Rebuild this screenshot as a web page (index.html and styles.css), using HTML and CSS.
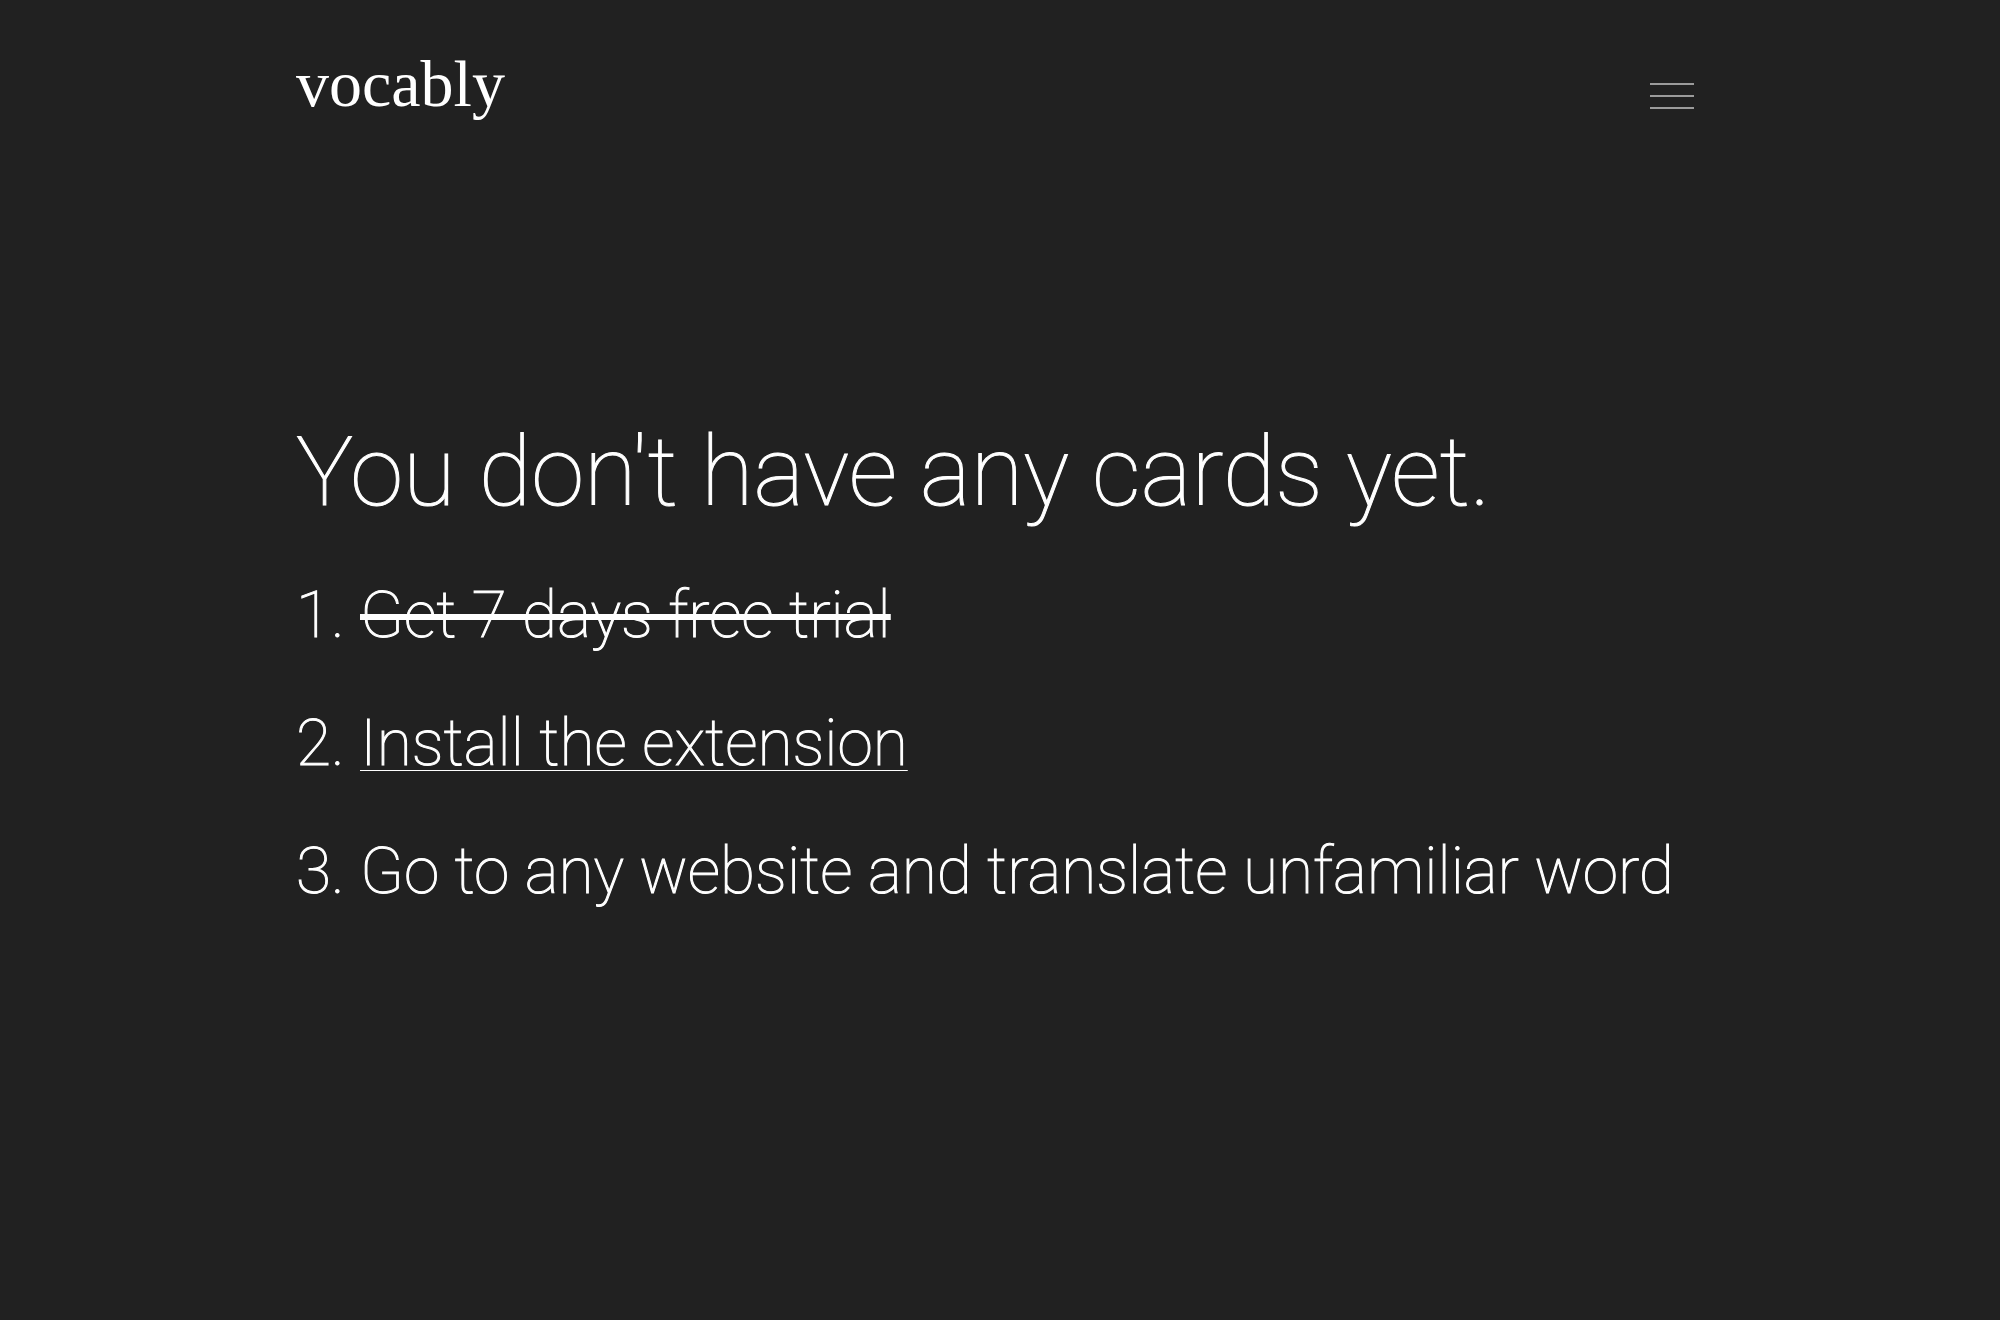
FILE: index.html
```html
<!DOCTYPE html>
<html lang="en">
<head>
<meta charset="utf-8">
<meta name="viewport" content="width=device-width, initial-scale=1">
<title>Vocably</title>
<link rel="stylesheet" href="styles.css">
</head>
<body>
<div class="page">
  <header class="header">
    <a class="logo" href="#">vocably</a>
    <button class="menu" type="button" aria-label="Menu">
      <svg class="menu-icon" viewBox="0 0 44 26" aria-hidden="true"><path d="M0 1h44M0 13h44M0 25h44"/></svg>
    </button>
  </header>
  <main class="content">
    <h1 class="title">You don't have any cards yet.</h1>
    <ol class="steps">
      <li class="step"><s class="done">Get 7 days free trial</s></li>
      <li class="step"><a class="link" href="#">Install the extension</a></li>
      <li class="step">Go to any website and translate unfamiliar word</li>
    </ol>
  </main>
</div>
</body>
</html>
```

FILE: styles.css
```css
* { box-sizing: border-box; }
body {
  margin: 0;
  background: #212121;
  color: #fff;
  font-family: Roboto, sans-serif;
  font-weight: 100;
}
.page {
  max-width: 1408px;
  min-height: 100vh;
  margin: 0 auto;
}
.header {
  display: flex;
  justify-content: space-between;
  align-items: center;
  min-height: 192px;
  padding-right: 10px;
}
.logo {
  padding-bottom: 24px;
  color: inherit;
  text-decoration: none;
  font: 400 66px/80px "Liberation Serif", serif;
}
.menu { padding: 0; border: 0; background: none; }
.menu-icon { display: block; width: 44px; height: 26px; fill: none; stroke: #9b9b9b; stroke-width: 2; }
.content {
  padding: 224px 0;
  -webkit-text-stroke: 1px #fff;
}
.title { margin: 0 0 24px; font-size: 96px; line-height: 112px; font-weight: 100; }
.steps { margin: 0; padding: 0 0 0 64px; font-size: 64px; line-height: 128px; }
.done { text-decoration-thickness: 6px; }
.link { color: inherit; text-decoration-thickness: 1px; text-underline-offset: 5px; }
```
